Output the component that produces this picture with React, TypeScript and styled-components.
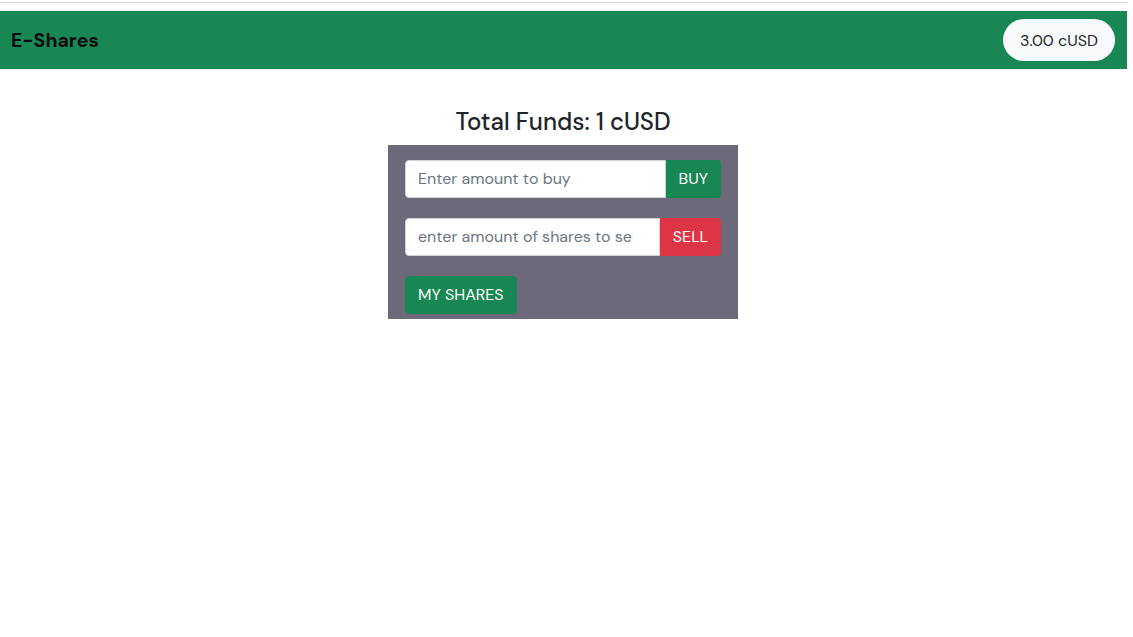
import styled, { createGlobalStyle } from "styled-components";

const GlobalStyle = createGlobalStyle`
  body {
    margin: 0;
    background: #fff;
    font-family: "DM Sans", Inter, "Liberation Sans", sans-serif;
    color: #212529;
  }
  * { box-sizing: border-box; }
`;

export default function App() {
  return (
    <>
      <GlobalStyle />
      <Page>
        <TopLine />
        <Navbar>
          <Brand>E-Shares</Brand>
          <Balance>3.00 cUSD</Balance>
        </Navbar>
        <Main>
          <Title>Total Funds: 1 cUSD</Title>
          <Card>
            <InputGroup>
              <Input placeholder="Enter amount to buy" />
              <GroupButton $variant="success">BUY</GroupButton>
            </InputGroup>
            <InputGroup>
              <Input $tight placeholder="enter amount of shares to sell" />
              <GroupButton $variant="danger">SELL</GroupButton>
            </InputGroup>
            <SharesButton>MY SHARES</SharesButton>
          </Card>
        </Main>
      </Page>
    </>
  );
}

const Page = styled.div`
  width: 1127px;
`;

const TopLine = styled.div`
  height: 3px;
  border-bottom: 1px solid #d6d1cd;
  margin-bottom: 8px;
`;

const Navbar = styled.nav`
  height: 58px;
  background: #198754;
  display: flex;
  align-items: center;
  justify-content: space-between;
  padding: 0 12px 0 11px;
`;

const Brand = styled.span`
  font-size: 19.5px;
  font-weight: 700;
  color: #0b0b0b;
`;

const Balance = styled.span`
  height: 42px;
  display: flex;
  align-items: center;
  padding: 0 17px;
  border-radius: 21px;
  background: #f8f9fa;
  font-size: 16px;
  color: #212529;
`;

const Main = styled.main`
  display: flex;
  flex-direction: column;
  align-items: center;
  padding: 39px 1px 0 0;
`;

const Title = styled.h4`
  margin: 0 0 8px;
  font-size: 24px;
  font-weight: 500;
  line-height: 1.2;
`;

const Card = styled.div`
  width: 350px;
  background: #6c6a7a;
  padding: 15px 17px 5px;
  display: flex;
  flex-direction: column;
  align-items: flex-start;
`;

const InputGroup = styled.div`
  display: flex;
  width: 100%;
  height: 38px;
  margin-bottom: 20px;
`;

const Input = styled.input<{ $tight?: boolean }>`
  flex: 1;
  min-width: 0;
  height: 100%;
  border: 1px solid #ced4da;
  border-radius: 4px 0 0 4px;
  padding: 0 ${(p) => (p.$tight ? "26px" : "12px")} 0 12px;
  font-family: inherit;
  font-size: 16px;
  color: #212529;
  background: #fff;
  outline: none;

  &::placeholder {
    color: #6c757d;
  }
`;

const colors = {
  success: "#198754",
  danger: "#dc3545",
};

const GroupButton = styled.button<{ $variant: "success" | "danger" }>`
  height: 100%;
  border: none;
  border-radius: 0 4px 4px 0;
  padding: 0 13px;
  background: ${(p) => colors[p.$variant]};
  color: #fff;
  font-family: inherit;
  font-size: 16px;
`;

const SharesButton = styled.button`
  height: 38px;
  border: none;
  border-radius: 4px;
  padding: 0 13px;
  background: #198754;
  color: #fff;
  font-family: inherit;
  font-size: 16px;
`;
